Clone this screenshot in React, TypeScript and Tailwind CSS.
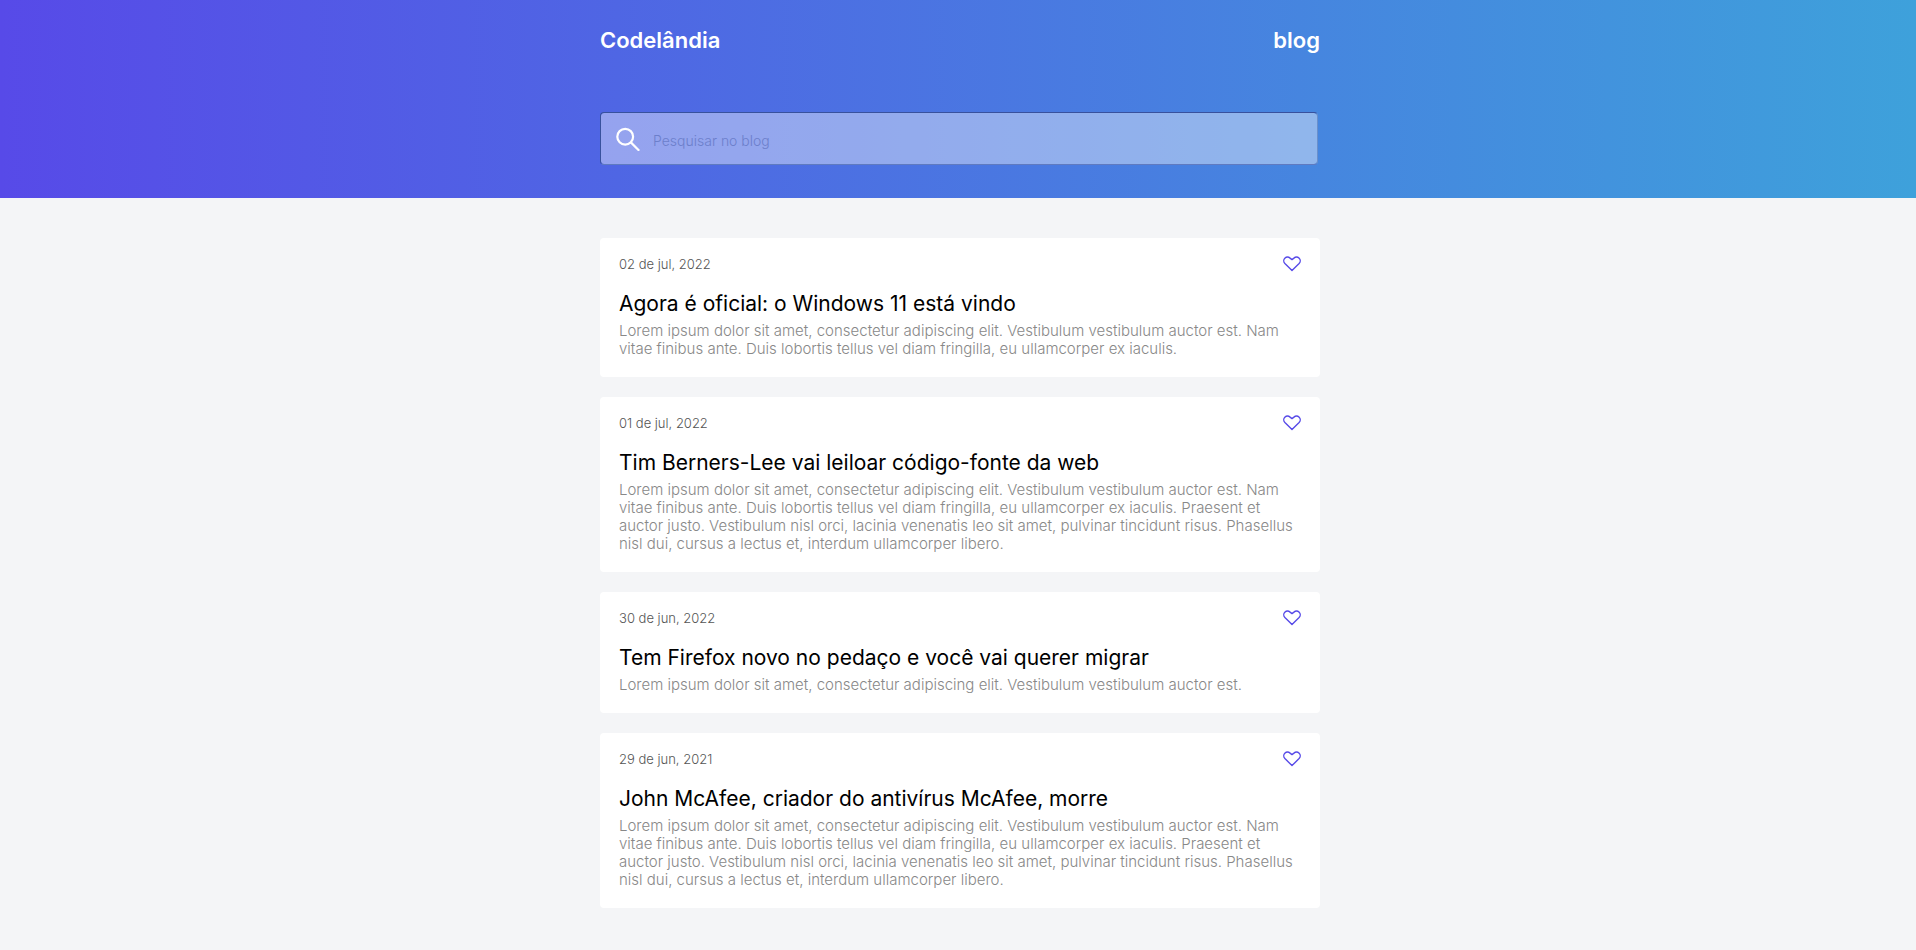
const posts = [
  {
    date: "02 de jul, 2022",
    title: "Agora é oficial: o Windows 11 está vindo",
    text: "Lorem ipsum dolor sit amet, consectetur adipiscing elit. Vestibulum vestibulum auctor est. Nam vitae finibus ante. Duis lobortis tellus vel diam fringilla, eu ullamcorper ex iaculis.",
  },
  {
    date: "01 de jul, 2022",
    title: "Tim Berners-Lee vai leiloar código-fonte da web",
    text: "Lorem ipsum dolor sit amet, consectetur adipiscing elit. Vestibulum vestibulum auctor est. Nam vitae finibus ante. Duis lobortis tellus vel diam fringilla, eu ullamcorper ex iaculis. Praesent et auctor justo. Vestibulum nisl orci, lacinia venenatis leo sit amet, pulvinar tincidunt risus. Phasellus nisl dui, cursus a lectus et, interdum ullamcorper libero.",
  },
  {
    date: "30 de jun, 2022",
    title: "Tem Firefox novo no pedaço e você vai querer migrar",
    text: "Lorem ipsum dolor sit amet, consectetur adipiscing elit. Vestibulum vestibulum auctor est.",
  },
  {
    date: "29 de jun, 2021",
    title: "John McAfee, criador do antivírus McAfee, morre",
    text: "Lorem ipsum dolor sit amet, consectetur adipiscing elit. Vestibulum vestibulum auctor est. Nam vitae finibus ante. Duis lobortis tellus vel diam fringilla, eu ullamcorper ex iaculis. Praesent et auctor justo. Vestibulum nisl orci, lacinia venenatis leo sit amet, pulvinar tincidunt risus. Phasellus nisl dui, cursus a lectus et, interdum ullamcorper libero.",
  },
];

function SearchIcon() {
  return (
    <svg viewBox="0 0 24 24" className="size-6 shrink-0" fill="none" stroke="white" strokeWidth="2.2" aria-hidden="true">
      <circle cx="9.2" cy="9.7" r="7.9" />
      <path d="M14.6 15.1L23.2 23.7" />
    </svg>
  );
}

function HeartIcon() {
  return (
    <svg viewBox="0 0 18 16" className="h-4 w-[18px]" fill="none" stroke="#574ae8" strokeWidth="1.4" strokeLinejoin="round" aria-hidden="true">
      <path d="M9 14.6L1.9 7.6C0.4 6 0.4 3.6 1.8 2.2C3.3 0.8 5.6 0.8 7.1 2.1L9 3.6L10.9 2.1C12.4 0.8 14.7 0.8 16.2 2.2C17.6 3.6 17.6 6 16.1 7.6Z" />
    </svg>
  );
}

export default function App() {
  return (
    <div className="min-h-screen bg-[#f4f5f7] font-['Inter','Liberation_Sans',sans-serif]">
      <header className="bg-linear-to-r/srgb from-[#574ae8] to-[#3ea1db] pt-6 pb-[33px] pl-1">
        <div className="mx-auto w-full max-w-[720px]">
          <div className="flex items-center justify-between text-[22px] leading-8 font-semibold text-white">
            <h1>Codelândia</h1>
            <a href="#blog">blog</a>
          </div>
          <label className="mt-14 mr-0.5 flex h-[53px] items-center gap-[13px] rounded border border-t-[#38519d] border-r-[#6a90cc] border-b-[#5f7ac0] border-l-[#38519d] bg-white/40 bg-clip-padding px-[15px]">
            <SearchIcon />
            <input
              type="search"
              aria-label="Pesquisar no blog"
              placeholder="Pesquisar no blog"
              className="min-w-0 flex-1 bg-transparent pt-1 text-sm font-light text-white outline-none placeholder:text-[#6c7fcb]"
            />
          </label>
        </div>
      </header>
      <main className="py-10 pl-1">
        <div className="mx-auto flex w-full max-w-[720px] flex-col gap-5">
          {posts.map((post) => (
            <article key={post.date} className="rounded bg-white px-[19px] pt-[18px] pb-[19px]">
              <div className="flex items-start justify-between">
                <time className="text-[13px] leading-4 font-light text-[#555]">{post.date}</time>
                <button type="button" aria-label="Curtir">
                  <HeartIcon />
                </button>
              </div>
              <h2 className="mt-4 text-[21px] leading-8 text-black">{post.title}</h2>
              <p className="mt-0.5 pr-2 text-[15px] leading-[18px] font-light text-[#888]">{post.text}</p>
            </article>
          ))}
        </div>
      </main>
    </div>
  );
}
